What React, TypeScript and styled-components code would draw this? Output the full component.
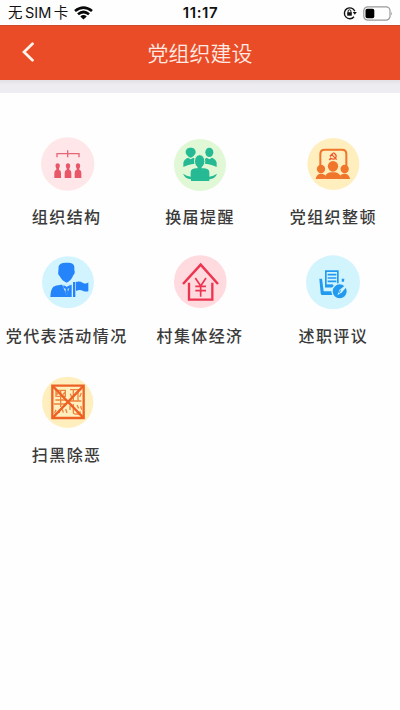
import React from 'react';
import styled, { createGlobalStyle } from 'styled-components';

const GlobalStyle = createGlobalStyle`
  * { box-sizing: border-box; }
  body {
    margin: 0;
    background: #fefefe;
    font-family: "Noto Sans CJK SC", sans-serif;
  }
`;

const Screen = styled.main`
  height: 710px;
  overflow: hidden;
  background: #fefefe;
`;

const StatusBar = styled.div`
  display: grid;
  grid-template-columns: 1fr auto 1fr;
  align-items: center;
  height: 25px;
  padding: 1px 7px 0 8px;
  color: #111;
`;

const Carrier = styled.div`
  display: flex;
  align-items: center;
  gap: 6px;
  font: 14.5px/24px Inter, "Noto Sans CJK SC", sans-serif;
  white-space: nowrap;
`;

const CarrierName = styled.span`
  display: flex;
  gap: 2.5px;
`;

const Clock = styled.time`
  font: 600 15px/24px Inter, sans-serif;
  letter-spacing: 0.6px;
`;

const Indicators = styled.div`
  display: flex;
  justify-content: flex-end;
  align-items: center;
  gap: 6px;
`;

const Header = styled.header`
  display: grid;
  grid-template-columns: 56px 1fr 56px;
  align-items: center;
  height: 55px;
  padding-bottom: 2px;
  background: #ea4c27;
  border-top: 1px solid #cf4a2b;
`;

const BackButton = styled.button`
  display: flex;
  justify-content: center;
  padding: 0;
  border: 0;
  background: none;
`;

const Title = styled.h1`
  margin: 0;
  color: #ffebe3;
  font-size: 21px;
  font-weight: 350;
  line-height: 30px;
  text-align: center;
`;

const Divider = styled.div`
  height: 13px;
  background: linear-gradient(#e2e0e5, #edecf1 5px);
`;

const Menu = styled.nav`
  display: grid;
  grid-template-columns: repeat(3, 1fr);
  grid-auto-rows: 119px;
  padding-top: 41px;
`;

const MenuItem = styled.a`
  display: flex;
  flex-direction: column;
  align-items: center;
  gap: 10px;
  color: #3a3a3a;
`;

const ItemIcon = styled.svg`
  display: block;
  width: 60px;
  height: 60px;
  flex: none;
`;

const Label = styled.span`
  font-size: 16px;
  font-weight: 500;
  line-height: 24px;
  letter-spacing: 1.4px;
  white-space: nowrap;
`;

const StructureIcon = () => (
  <ItemIcon viewBox="20 12 180 180">
    <circle cx="112" cy="102" r="80" fill="#ffe7e9" />
    <path d="M80 82V71H146V82M112 61V82" fill="none" stroke="#e76575" strokeWidth="4" />
    {[82, 113, 143].map((x) => (
      <g key={x} transform={`translate(${x} 0)`} fill="#e85668">
        <ellipse cx="0" cy="108" rx="6.5" ry="8" />
        <path d="M-4 112H4V119Q10 120 10 128V144H-10V128Q-10 120-4 119Z" />
      </g>
    ))}
  </ItemIcon>
);

const ElectionIcon = () => (
  <ItemIcon viewBox="15 12 180 180" fill="#25b994">
    <circle cx="105" cy="105" r="78" fill="#e0f8d5" />
    <path d="M62 67C62 57 69 53 77 53S92 57 92 67C92 73 88 75 85 79Q77 87 69 79C66 75 62 73 62 67Z" />
    <ellipse cx="133" cy="67" rx="12" ry="14" />
    <path d="M55 111V99Q56 88 69 83L77 88L85 83L96 91L90 101Q68 103 55 111Z" />
    <path d="M155 111V99Q154 88 141 83L133 88L125 83L114 91L120 101Q142 103 155 111Z" />
    <path d="M54 131Q65 138 77 140V127Q77 117 91 115H118Q133 117 133 127V140Q145 138 156 131Q151 146 133 148V153H78V148Q60 146 54 131Z" />
    <ellipse cx="104" cy="94" rx="15.5" ry="20" stroke="#e0f8d5" strokeWidth="3" />
    <path d="M98 111H110V117H98Z" />
  </ItemIcon>
);

const PartyIcon = () => (
  <ItemIcon viewBox="16 12 180 180" fill="#ef762a">
    <circle cx="107" cy="102" r="78" fill="#ffefbf" />
    <path d="M68 109V72Q68 59 81 59H133Q146 59 146 72V109" fill="none" stroke="#ef762a" strokeWidth="6" />
    <g fill="none" stroke="#ed5a2c" strokeWidth="3.8">
      <path d="M107 68Q119 75 114 84Q108 91 98 84M102 73L117 89" />
      <path d="M97 79L106 70M100 84L95 90" strokeWidth="5" />
    </g>
    <ellipse cx="106" cy="109" rx="15.5" ry="16" />
    <circle cx="70" cy="117" r="12.5" />
    <circle cx="141" cy="117" r="12.5" />
    <path d="M54 147Q56 133 68 131H73Q81 132 84 137L80 147Z" />
    <path d="M157 147Q155 133 143 131H138Q130 132 127 137L131 147Z" />
    <path d="M80 147Q82 130 98 127H113Q129 130 131 147Z" />
  </ItemIcon>
);

const DelegateIcon = () => (
  <ItemIcon viewBox="20 9 180 180" fill="#2584fa">
    <circle cx="113" cy="97" r="78" fill="#d2f4ff" />
    <path d="M85 49Q87 39 106 38H114Q130 38 132 50V61Q134 62 133 70L129 76Q122 93 109 98Q95 93 88 78Q82 75 84 64Z" />
    <path d="M60 141Q61 118 69 110Q75 106 92 104H124V141Z" />
    <path d="M95 103H121L109 136Z" fill="#d2f4ff" />
    <path d="M99 106L107 109L106 117L99 113ZM119 106L111 109L112 117L119 113ZM107 110H111L113 127L109 136L105 127Z" />
    <path d="M128 96H135V141H128ZM137 96Q147 92 157 98T174 97V124Q166 126 157 122T137 123Z" />
  </ItemIcon>
);

const EconomyIcon = () => (
  <ItemIcon viewBox="15 9 180 180">
    <circle cx="106" cy="95" r="79" fill="#ffdade" />
    <g fill="none" stroke="#ec3551">
      <path d="M54 102L107 44L159 102" strokeWidth="7.5" />
      <path d="M72 98V149H142V98" strokeWidth="7" />
      <path d="M91 84L107 108L123 84M107 108V140M91 109H123M91 122H123" strokeWidth="5" />
    </g>
  </ItemIcon>
);

const ReviewIcon = () => (
  <ItemIcon viewBox="16 9 180 180" fill="#229aef">
    <circle cx="106" cy="97" r="81" fill="#d2f4fd" />
    <path d="M65 86H73L78 124H110V135H72Q70 135 69 130Z" />
    <path d="M84.5 63.5H120.5V109H84.5Z" fill="none" stroke="#229aef" strokeWidth="5" />
    <path d="M90 74H116M90 84H116M90 94H116" fill="none" stroke="#229aef" strokeWidth="5" />
    <path d="M82 103H106V112H82Z" />
    <path d="M132 86H140L139 95H132Z" />
    <circle cx="126" cy="124" r="23" stroke="#d2f4fd" strokeWidth="4" />
    <path d="M143 106L126 119L119 136L133 127L147 110Z" fill="#d2f4fd" />
    <path d="M129 121L124 129" stroke="#229aef" strokeWidth="3" />
    <path d="M143 101L151 108" stroke="#d2f4fd" strokeWidth="4" />
  </ItemIcon>
);

const CampaignIcon = () => (
  <ItemIcon viewBox="20 6 180 180">
    <circle cx="112" cy="97" r="77" fill="#ffefbf" />
    <path d="M66 47H160V144H66Z" fill="none" stroke="#ed6224" strokeWidth="7" />
    <g fill="none" stroke="#ed843e" strokeWidth="4">
      <path d="M77 61H105V79H77ZM91 61V111M75 90H109M71 102H109M79 68L82 74M103 67L98 74" />
      <path d="M77 119L73 130M87 119V129M96 118L99 128M106 117L110 129" />
      <path d="M119 59H153M129 60V91M143 60V91M118 93H153M120 71L124 82M153 69L148 81" />
      <path d="M119 107V120M129 102V127Q129 133 139 132H149V124M140 105L145 115M151 108L154 119" />
    </g>
    <path d="M68 49L158 142M158 49L68 142" stroke="#ed6224" strokeWidth="7" />
  </ItemIcon>
);

const items = [
  { label: '组织结构', Icon: StructureIcon },
  { label: '换届提醒', Icon: ElectionIcon },
  { label: '党组织整顿', Icon: PartyIcon },
  { label: '党代表活动情况', Icon: DelegateIcon },
  { label: '村集体经济', Icon: EconomyIcon },
  { label: '述职评议', Icon: ReviewIcon },
  { label: '扫黑除恶', Icon: CampaignIcon },
];

const WifiIcon = () => (
  <svg width="19" height="14" viewBox="0 0 19 14" fill="none" stroke="#080808" strokeWidth="2.7">
    <path d="M1 5Q9.5-1.8 18 5M4 8.3Q9.5 3.7 15 8.3" />
    <path d="M6.3 10.4Q9.5 7.8 12.7 10.4L9.5 13.5Z" fill="#080808" stroke="none" />
  </svg>
);

const RotationLockIcon = () => (
  <svg width="14" height="14" viewBox="0 0 14 14" fill="none" stroke="#111" strokeWidth="1.4">
    <path d="M11 10.7A5.4 5.4 0 1 1 11.8 5.2" />
    <path d="M9.8 6H13.8L11.8 8.8Z" fill="#111" stroke="none" />
    <path d="M4.2 6.2H8.8V9.7H4.2Z" fill="#111" stroke="none" />
    <path d="M5.1 6.5V5.1Q5.1 3.8 6.5 3.8T7.9 5.1V6.5" strokeWidth="1" />
  </svg>
);

const BatteryIcon = () => (
  <svg width="30" height="15" viewBox="0 0 30 15">
    <rect x="0.8" y="0.8" width="26.2" height="13.4" rx="4" fill="none" stroke="#999" strokeWidth="1.2" />
    <rect x="2.5" y="2.7" width="8.8" height="9.6" rx="1.8" fill="#000" />
    <path d="M28.3 5.4Q29.8 7.5 28.3 9.6Z" fill="#888" />
  </svg>
);

export default function App() {
  return (
    <Screen>
      <GlobalStyle />
      <StatusBar>
        <Carrier>
          <CarrierName><span>无</span><span>SIM</span><span>卡</span></CarrierName>
          <WifiIcon />
        </Carrier>
        <Clock>11:17</Clock>
        <Indicators>
          <RotationLockIcon />
          <BatteryIcon />
        </Indicators>
      </StatusBar>
      <Header>
        <BackButton aria-label="返回">
          <svg width="14" height="20" viewBox="0 0 14 20" fill="none" stroke="#fff4ed" strokeWidth="2.7">
            <path d="M11.5 1.8L3 10L11.5 18.2" strokeLinecap="round" />
          </svg>
        </BackButton>
        <Title>党组织建设</Title>
      </Header>
      <Divider />
      <Menu>
        {items.map(({ label, Icon }) => (
          <MenuItem key={label}>
            <Icon />
            <Label>{label}</Label>
          </MenuItem>
        ))}
      </Menu>
    </Screen>
  );
}
